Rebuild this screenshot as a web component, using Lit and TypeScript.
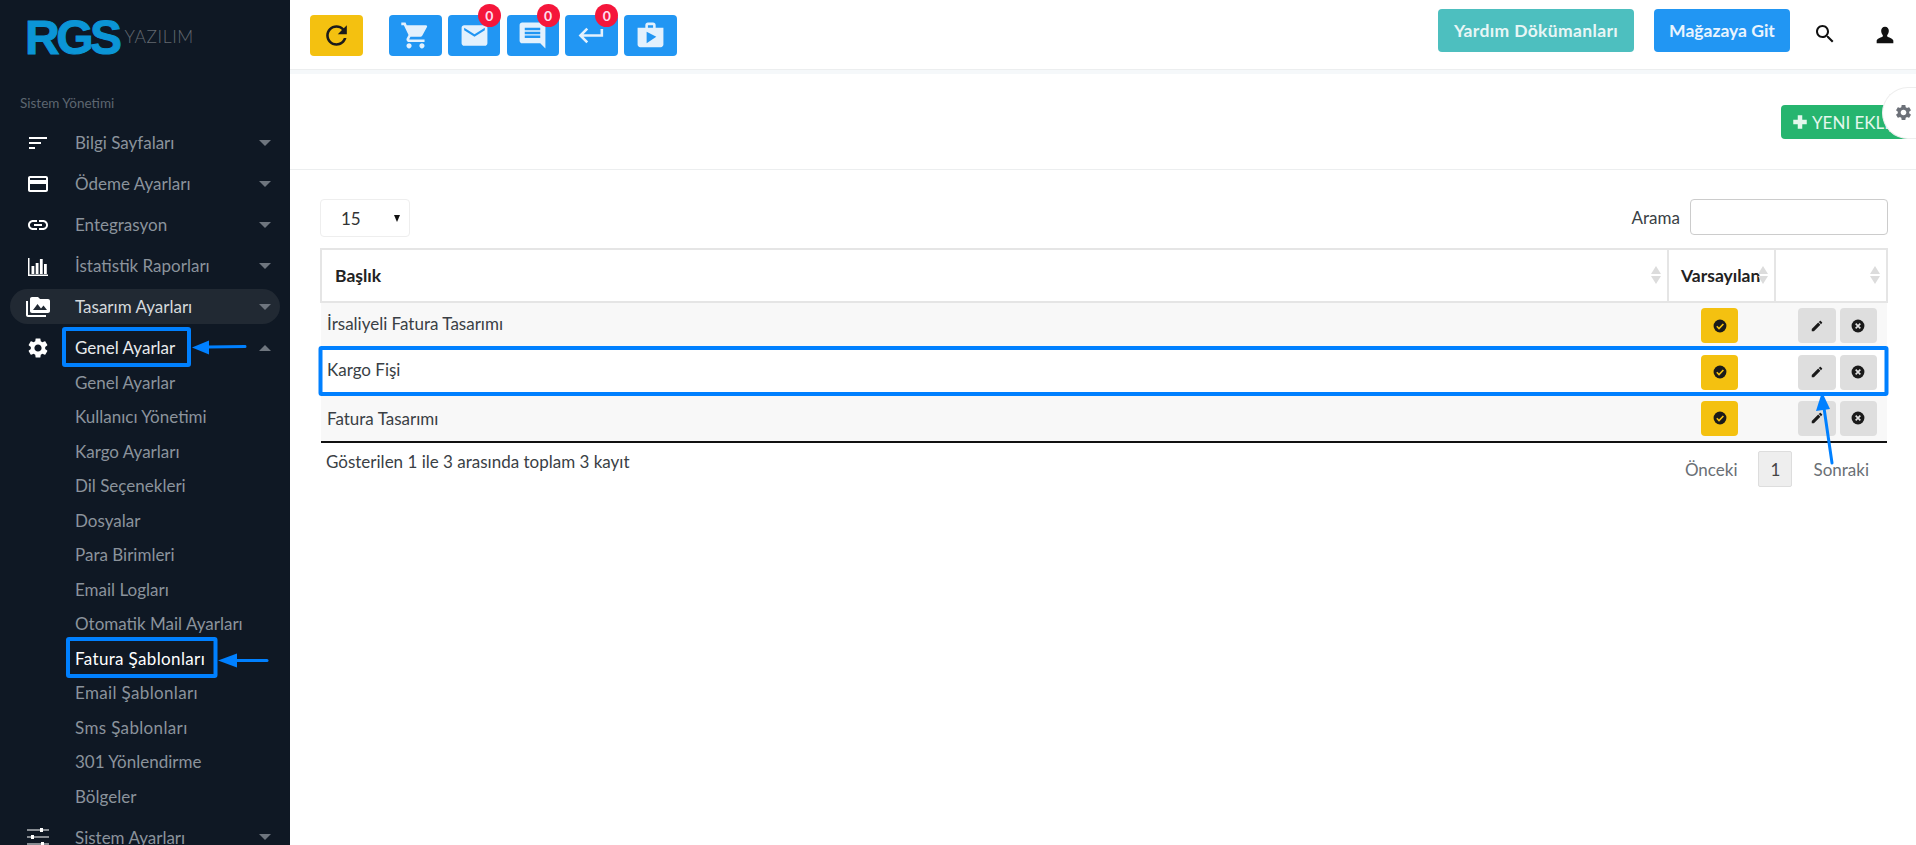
import { LitElement, html, css, svg } from "lit";
import { customElement } from "lit/decorators.js";

const P: Record<string, string> = {
  sort: "M3 18h6v-2H3v2zM3 6v2h18V6H3zm0 7h12v-2H3v2z",
  card: "M20 4H4c-1.11 0-1.99.89-1.99 2L2 18c0 1.11.89 2 2 2h16c1.11 0 2-.89 2-2V6c0-1.11-.89-2-2-2zm0 14H4v-6h16v6zm0-10H4V6h16v2z",
  link: "M3.9 12c0-1.71 1.39-3.1 3.1-3.1h4V7H7c-2.76 0-5 2.24-5 5s2.24 5 5 5h4v-1.9H7c-1.71 0-3.1-1.39-3.1-3.1zM8 13h8v-2H8v2zm9-6h-4v1.9h4c1.71 0 3.1 1.39 3.1 3.1s-1.39 3.1-3.1 3.1h-4V17h4c2.76 0 5-2.24 5-5s-2.24-5-5-5z",
  chart: "M2 20.500h20V22H2zM2 4h1.500v17H2zM5.500 12h2.800v8H5.500zM9.700 9h2.800v11H9.700zM13.900 5h2.800v15h-2.800zM18 10h2.800v10H18z",
  media: "M2 6H0v5h.01L0 20c0 1.1.9 2 2 2h18v-2H2V6zm20-2h-8l-2-2H6c-1.1 0-1.99.9-1.99 2L4 16c0 1.1.9 2 2 2h16c1.1 0 2-.9 2-2V6c0-1.1-.9-2-2-2zM7 15l4.5-6 3.5 4.51 2.5-3.01L21 15H7z",
  gear: "M19.14 12.94c.04-.3.06-.61.06-.94 0-.32-.02-.64-.07-.94l2.03-1.58c.18-.14.23-.41.12-.61l-1.92-3.32c-.12-.22-.37-.29-.59-.22l-2.39.96c-.5-.38-1.03-.7-1.62-.94l-.36-2.54c-.04-.24-.24-.41-.48-.41h-3.84c-.24 0-.43.17-.47.41l-.36 2.54c-.59.24-1.13.57-1.62.94l-2.39-.96c-.22-.08-.47 0-.59.22L2.74 8.87c-.12.21-.08.47.12.61l2.03 1.58c-.05.3-.09.63-.09.94s.02.64.07.94l-2.03 1.58c-.18.14-.23.41-.12.61l1.92 3.32c.12.22.37.29.59.22l2.39-.96c.5.38 1.03.7 1.62.94l.36 2.54c.05.24.24.41.48.41h3.84c.24 0 .44-.17.47-.41l.36-2.54c.59-.24 1.13-.56 1.62-.94l2.39.96c.22.08.47 0 .59-.22l1.92-3.32c.12-.22.07-.47-.12-.61l-2.01-1.58zM12 15.6c-1.98 0-3.6-1.62-3.6-3.6s1.62-3.6 3.6-3.6 3.6 1.62 3.6 3.6-1.62 3.6-3.6 3.6z",
  tune: "M1 4.4h22v1H1zM1 11.4h22v1H1zM1 18.4h22v1H1zM14 3h3v4h-3zM5 10h3v4H5zM15 17h3v4h-3z",
  cart: "M7 18c-1.1 0-1.99.9-1.99 2S5.9 22 7 22s2-.9 2-2-.9-2-2-2zM1 2v2h2l3.6 7.59-1.35 2.45c-.16.28-.25.61-.25.96 0 1.1.9 2 2 2h12v-2H7.42c-.14 0-.25-.11-.25-.25l.03-.12.9-1.63h7.45c.75 0 1.41-.41 1.75-1.03l3.58-6.49c.08-.14.12-.31.12-.48 0-.55-.45-1-1-1H5.21l-.94-2H1zm16 16c-1.1 0-1.99.9-1.99 2s.89 2 1.99 2 2-.9 2-2-.9-2-2-2z",
  mail: "M20 4H4c-1.1 0-1.99.9-1.99 2L2 18c0 1.1.9 2 2 2h16c1.1 0 2-.9 2-2V6c0-1.1-.9-2-2-2zm0 4l-8 5-8-5V6l8 5 8-5v2z",
  msg: "M21.99 4c0-1.1-.89-2-1.99-2H4c-1.1 0-2 .9-2 2v12c0 1.1.9 2 2 2h14l4 4-.01-18zM18 14H6v-2h12v2zm0-3H6V9h12v2zm0-3H6V6h12v2z",
  ret: "M19 7v4H5.83l3.58-3.59L8 6l-6 6 6 6 1.41-1.41L5.83 13H21V7z",
  shop: "M16 6V4c0-1.11-.89-2-2-2h-4c-1.11 0-2 .89-2 2v2H2v13c0 1.11.89 2 2 2h16c1.11 0 2-.89 2-2V6h-6zm-6-2h4v2h-4V4zM9 18V9l7.5 4L9 18z",
  refresh: "M17.65 6.35C16.2 4.9 14.21 4 12 4c-4.42 0-7.99 3.58-7.99 8s3.57 8 7.99 8c3.73 0 6.84-2.55 7.73-6h-2.08c-.82 2.33-3.04 4-5.65 4-3.31 0-6-2.69-6-6s2.69-6 6-6c1.66 0 3.14.69 4.22 1.78L13 11h7V4l-2.35 2.35z",
  search: "M15.5 14h-.79l-.28-.27C15.41 12.59 16 11.11 16 9.5 16 5.91 13.09 3 9.5 3S3 5.91 3 9.5 5.91 16 9.5 16c1.61 0 3.09-.59 4.23-1.57l.27.28v.79l5 4.99L20.49 19l-4.99-5zm-6 0C7.01 14 5 11.99 5 9.5S7.01 5 9.5 5 14 7.01 14 9.5 11.99 14 9.5 14z",
  user: "M12 2c-3 0-4.6 2.2-4.6 5 0 2.2.9 4 2 5.2v1.6c-1.6 1.2-6.4 2-7.4 4.7V22h20v-3.5c-1-2.7-5.8-3.5-7.4-4.7v-1.6c1.100-1.200 2-3 2-5.200 0-2.800-1.600-5-4.600-5z",
  pencil: "M3 17.25V21h3.75L17.81 9.94l-3.750-3.750L3 17.250zM20.710 7.040c.39-.39.39-1.020 0-1.410l-2.340-2.340c-.39-.39-1.020-.39-1.410 0l-1.830 1.830 3.750 3.750 1.830-1.830z",
  plus: "M9 3h6v6h6v6h-6v6H9v-6H3V9h6z",
};

const icon = (name: string, cls = "") =>
  html`<svg class="ic ${cls}" viewBox="0 0 24 24" aria-hidden="true"><path d="${P[name]}" fill="currentColor"></path></svg>`;

const checkIcon = svg`<circle cx="12" cy="12" r="11" fill="#1a1a1a"></circle><path d="M6.500 12.500l3.800 3.800 7.500-7.800" fill="none" stroke="#f4c110" stroke-width="2.800"></path>`;
const closeIcon = svg`<circle cx="12" cy="12" r="11" fill="#1a1a1a"></circle><path d="M8 8l8 8M16 8l-8 8" fill="none" stroke="#e0e0e0" stroke-width="2.800"></path>`;

type Menu = { label: string; icon: string; cls?: string; open?: boolean };
const before: Menu[] = [
  { label: "Bilgi Sayfaları", icon: "sort" },
  { label: "Ödeme Ayarları", icon: "card" },
  { label: "Entegrasyon", icon: "link" },
  { label: "İstatistik Raporları", icon: "chart" },
  { label: "Tasarım Ayarları", icon: "media", cls: "pill" },
  { label: "Genel Ayarlar", icon: "gear", cls: "bright", open: true },
];
const subs = [
  "Genel Ayarlar", "Kullanıcı Yönetimi", "Kargo Ayarları", "Dil Seçenekleri", "Dosyalar",
  "Para Birimleri", "Email Logları", "Otomatik Mail Ayarları", "Fatura Şablonları",
  "Email Şablonları", "Sms Şablonları", "301 Yönlendirme", "Bölgeler",
];
const rows = ["İrsaliyeli Fatura Tasarımı", "Kargo Fişi", "Fatura Tasarımı"];

@customElement("app-root")
export class AppRoot extends LitElement {
  static styles = css`
    :host { display: block; height: 845px; overflow: hidden; position: relative; background: #fff;
      font-family: "Lato", "Liberation Sans", sans-serif; font-size: 17px; color: #3a3f45; }
    * { box-sizing: border-box; }
    .ic { width: 24px; height: 24px; display: block; flex: none; }
    .app { display: flex; height: 845px; }
    .side { width: 290px; flex: none; background: #0f1824; color: #8b939c; overflow: hidden; }
    .logo { height: 82px; padding: 13px 0 0 25px; display: flex; align-items: flex-start; }
    .rgs { font: 900 48px/50px "Liberation Sans", sans-serif; letter-spacing: -3.500px; color: #0b95d6; -webkit-text-stroke: 1px #0b95d6; }
    .yaz { font: 300 17.500px/24px "Lato", sans-serif; color: #626870; margin: 12px 0 0 6px; letter-spacing: .6px; }
    .cap { font-size: 13.500px; color: #5d6670; padding: 13px 0 0 20px; height: 40px; }
    .item { height: 41px; display: flex; align-items: center; margin: 0 10px; padding: 0 0 0 16px; border-radius: 18px; }
    .item .ic { color: #fff; }
    .item .t { margin-left: 25px; flex: 1; }
    .caret { width: 0; height: 0; border-left: 6px solid transparent; border-right: 6px solid transparent; border-top: 6px solid #6e757e; margin-right: 9px; }
    .caret.up { border-top: 0; border-bottom: 6px solid #6e757e; }
    .pill { height: 35px; margin-top: 3px; margin-bottom: 3px; background: #212933; color: #d5d9dd; }
    .bright { color: #e8eaec; }
    .sub { height: 34.500px; display: flex; align-items: center; padding-left: 75px; }
    .sub.wide { letter-spacing: .35px; }
    .sub.on { color: #fff; }
    .subs { margin-top: -3px; margin-bottom: 3px; }

    .main { flex: 1; min-width: 0; display: flex; flex-direction: column; }
    .top { height: 69px; flex: none; display: flex; align-items: flex-start; padding: 15px 0 0 20px; }
    .btn { height: 41px; border-radius: 4px; display: flex; align-items: center; justify-content: center; position: relative; flex: none; }
    .btn .ic { width: 31px; height: 31px; }
    .refresh { width: 53px; background: #f4c110; color: #1b1b1b; margin-right: 26px; }
    .blue { width: 52.500px; background: #2196f3; color: #e3f1fd; margin-right: 6.300px; }
    .badge { position: absolute; top: -11px; right: -.5px; width: 23px; height: 23px; border-radius: 50%; background: #f5163b; color: #fde; font: 700 14px/23px "Lato", sans-serif; text-align: center; }
    .spacer { flex: 1; }
    .tbtn { height: 43px; margin-top: -6px; border-radius: 4px; color: #e8f6f6; font-weight: 700; display: flex; align-items: center; justify-content: center; font-size: 17.500px; white-space: nowrap; }
    .help { width: 196px; background: #4dbfbf; margin-right: 20px; letter-spacing: .35px; }
    .shopb { width: 136px; background: #2196f3; color: #e9f4fe; }
    .tico { color: #111; }
    .tico.s { margin: 7px 0 0 23px; }
    .tico.u { width: 20px; height: 20px; margin: 10px 21px 0 38px; }
    .band { height: 5px; flex: none; background: #f5f8fa; border-top: 1px solid #eceeef; }
    .head { height: 96px; flex: none; border-bottom: 1px solid #eceeef; display: flex; justify-content: flex-end; padding-top: 31px; }
    .add { width: 135px; height: 34px; background: #26b56f; border-radius: 4px; color: #e4f7ed; display: flex; align-items: center; padding-left: 10px; gap: 3px; white-space: nowrap; font-size: 17px; }
    .add .ic { width: 18px; height: 18px; }
    .tab { position: absolute; right: 0; top: 87px; width: 34px; height: 52px; background: #fff; border: 1px solid #eee; border-right: 0; border-radius: 26px 0 0 26px; display: flex; align-items: center; justify-content: flex-end; padding-right: 3px; color: #6c7078; padding-bottom: 2px; }
    .tab .ic { width: 19px; height: 19px; }
    .body { padding: 29px 28px 0 30px; }
    .ctl { display: flex; justify-content: space-between; height: 49px; }
    .sel { width: 90px; height: 38px; border: 1px solid #eee; border-radius: 4px; display: flex; align-items: center; padding: 0 9px 0 20px; justify-content: space-between; color: #333; }
    .tri { width: 0; height: 0; border-left: 3.500px solid transparent; border-right: 3.500px solid transparent; border-top: 7px solid #111; }
    .find { display: flex; gap: 10px; align-items: center; height: 36px; }
    .inp { width: 198px; height: 36px; border: 1px solid #ccc; border-radius: 4px; background: #fff; }
    table { border-collapse: collapse; width: 100%; table-layout: fixed; }
    th { height: 53px; border: 2px solid #e5e5e5; font-weight: 700; font-size: 17.500px; color: #222; text-align: left; padding: 0 0 0 13px; position: relative; white-space: nowrap; }
    th.v { padding: 0 0 0 12px; }
    .sorter { position: absolute; right: 6px; top: 50%; margin-top: -10px; display: flex; flex-direction: column; gap: 2px; }
    .sorter i { display: block; width: 0; height: 0; border-left: 5px solid transparent; border-right: 5px solid transparent; }
    .sorter i:first-child { border-bottom: 8px solid #dcdcdc; }
    .sorter i:last-child { border-top: 8px solid #dcdcdc; }
    td { height: 46.700px; padding: 0 0 0 6px; }
    td.title { padding-bottom: 5px; }
    tr:last-child td.title { padding-bottom: 0; }
    tr.odd td { background: #f8f8f8; }
    tr:last-child td { border-bottom: 2px solid #111; }
    .acts { display: flex; gap: 4px; padding-left: 17px; }
    .a { width: 37.500px; height: 35px; border-radius: 4px; display: flex; align-items: center; justify-content: center; background: #dedede; color: #1a1a1a; }
    .a.y { background: #f4c110; width: 37px; margin-left: 27px; }
    .a .ic { width: 14px; height: 14px; }
    .foot { display: flex; justify-content: space-between; margin-top: 8px; padding: 0 19px 0 6px; }
    .pager { display: flex; align-items: center; gap: 21px; color: #6a6f75; }
    .cur { width: 34px; height: 36px; background: #eee; border: 1px solid #ddd; border-radius: 2px; display: flex; align-items: center; justify-content: center; color: #444; }
    .ann { position: absolute; left: 0; top: 0; width: 1916px; height: 845px; pointer-events: none; }
  `;

  private menuItem(m: Menu) {
    return html`<div class="item ${m.cls ?? ""}">${icon(m.icon)}<span class="t">${m.label}</span><span class="caret ${m.open ? "up" : ""}"></span></div>`;
  }

  render() {
    return html`
      <div class="app">
        <aside class="side">
          <div class="logo"><span class="rgs">RGS</span><span class="yaz">YAZILIM</span></div>
          <div class="cap">Sistem Yönetimi</div>
          ${before.map((m) => this.menuItem(m))}
          <div class="subs">
            ${subs.map((s) => html`<div class="sub ${s === "Fatura Şablonları" ? "on" : ""} ${s.includes("Şablon") ? "wide" : ""}">${s}</div>`)}
          </div>
          ${this.menuItem({ label: "Sistem Ayarları", icon: "tune" })}
        </aside>
        <div class="main">
          <div class="top">
            <div class="btn refresh">${icon("refresh")}</div>
            <div class="btn blue">${icon("cart")}</div>
            <div class="btn blue">${icon("mail")}<span class="badge">0</span></div>
            <div class="btn blue">${icon("msg")}<span class="badge">0</span></div>
            <div class="btn blue">${icon("ret")}<span class="badge">0</span></div>
            <div class="btn blue">${icon("shop")}</div>
            <div class="spacer"></div>
            <div class="tbtn help">Yardım Dökümanları</div>
            <div class="tbtn shopb">Mağazaya Git</div>
            ${icon("search", "tico s")}
            ${icon("user", "tico u")}
          </div>
          <div class="band"></div>
          <div class="head"><div class="add">${icon("plus")}YENI EKLE</div></div>
          <div class="body">
            <div class="ctl">
              <div class="sel"><span>15</span><span class="tri"></span></div>
              <div class="find"><span>Arama</span><div class="inp"></div></div>
            </div>
            <table>
              <colgroup><col /><col style="width:107px" /><col style="width:112px" /></colgroup>
              <thead><tr>
                <th>Başlık<span class="sorter"><i></i><i></i></span></th>
                <th class="v">Varsayılan<span class="sorter"><i></i><i></i></span></th>
                <th><span class="sorter"><i></i><i></i></span></th>
              </tr></thead>
              <tbody>
                ${rows.map((r, i) => html`<tr class="${i % 2 === 0 ? "odd" : ""}">
                  <td class="title">${r}</td>
                  <td><div class="a y"><svg class="ic" viewBox="0 0 24 24">${checkIcon}</svg></div></td>
                  <td><div class="acts"><div class="a">${icon("pencil")}</div><div class="a"><svg class="ic" viewBox="0 0 24 24">${closeIcon}</svg></div></div></td>
                </tr>`)}
              </tbody>
            </table>
            <div class="foot">
              <span class="info">Gösterilen 1 ile 3 arasında toplam 3 kayıt</span>
              <div class="pager"><span>Önceki</span><span class="cur">1</span><span>Sonraki</span></div>
            </div>
          </div>
        </div>
      </div>
      <div class="tab">${icon("gear")}</div>
      <svg class="ann" viewBox="0 0 1916 845">
        <g fill="none" stroke="#0080ff" stroke-width="4">
          <rect x="64" y="329" width="125" height="36" rx="1"></rect>
          <rect x="68" y="639" width="147.500" height="37" rx="1"></rect>
          <rect x="320.500" y="348" width="1566" height="46" rx="1"></rect>
        </g>
        <g stroke="#0080ff" stroke-width="3" stroke-linecap="round" fill="#0080ff">
          <path d="M245 346.500L208 347" fill="none"></path>
          <path d="M267 660.500L235 660.500" fill="none"></path>
          <path d="M1832 463L1824 408" fill="none"></path>
        </g>
        <g fill="#0080ff">
          <path d="M192 347.500l17-7v14z"></path>
          <path d="M218 660.500l19-7v14z"></path>
          <path d="M1822 392l-6 19 14-2z"></path>
        </g>
      </svg>
    `;
  }
}
